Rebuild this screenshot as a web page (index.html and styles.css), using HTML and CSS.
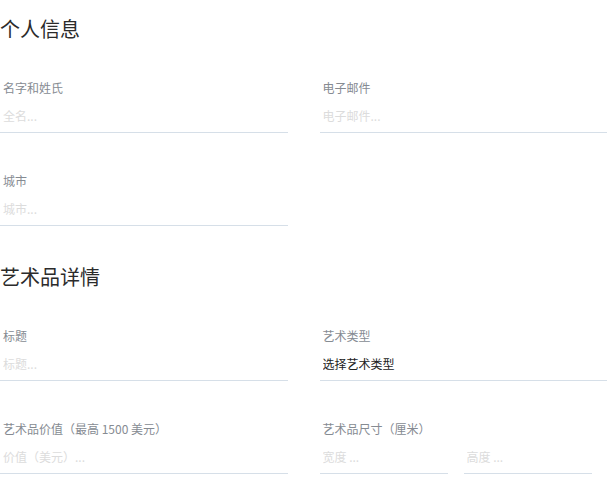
FILE: index.html
```html
<!DOCTYPE html>
<html>
	<head>
		<meta charset="utf-8">
		<title>艺术品提交</title>
		<link rel="stylesheet" href="styles.css">
	</head>
	<body>
		<form class="art-form">
			<section class="form-section">
				<h2>个人信息</h2>
				<div class="form-grid">
					<div class="field">
						<label for="name">名字和姓氏</label>
						<input type="text" id="name" placeholder="全名...">
					</div>
					<div class="field">
						<label for="email">电子邮件</label>
						<input type="text" id="email" placeholder="电子邮件...">
					</div>
					<div class="field">
						<label for="city">城市</label>
						<input type="text" id="city" placeholder="城市...">
					</div>
				</div>
			</section>

			<section class="form-section">
				<h2>艺术品详情</h2>
				<div class="form-grid">
					<div class="field">
						<label for="title">标题</label>
						<input type="text" id="title" placeholder="标题...">
					</div>
					<div class="field">
						<label for="type">艺术类型</label>
						<select id="type">
							<option>选择艺术类型</option>
							<option>绘画</option>
							<option>雕塑</option>
							<option>摄影</option>
						</select>
					</div>
					<div class="field">
						<label for="price">艺术品价值（最高 1500 美元）</label>
						<input type="text" id="price" placeholder="价值（美元）...">
					</div>
					<div class="field">
						<label for="width">艺术品尺寸（厘米）</label>
						<div class="dims">
							<input type="text" id="width" placeholder="宽度 ...">
							<input type="text" id="height" placeholder="高度 ...">
						</div>
					</div>
				</div>
			</section>
		</form>
	</body>
</html>
```

FILE: styles.css
```css
body {
	margin: 0;
	padding-top: 15px;
	background: #ffffff;
	font-family: "Noto Sans CJK SC", "Noto Sans", sans-serif;
	overflow: hidden;
}

.form-section {
	margin-bottom: 37px;
}

.form-section h2 {
	margin: 0 0 37px 0;
	font-size: 20px;
	line-height: 28px;
	font-weight: normal;
	color: #2b2b2b;
}

.form-grid {
	display: grid;
	grid-template-columns: 1fr 1fr;
	column-gap: 32px;
	row-gap: 40px;
}

.field {
	display: flex;
	flex-direction: column;
}

.field label {
	padding-left: 3px;
	margin-bottom: 2px;
	font-size: 12px;
	line-height: 16px;
	color: #868b92;
}

.field input,
.field select {
	box-sizing: border-box;
	height: 35px;
	padding: 0 3px;
	border: none;
	border-bottom: 1px solid #d6dfe8;
	border-radius: 0;
	background: transparent;
	font-family: inherit;
	font-size: 12px;
	color: #222222;
	outline: none;
}

.field select {
	-webkit-appearance: none;
	appearance: none;
}

.field input::placeholder {
	color: #dcdcdc;
}

.dims {
	display: flex;
	gap: 16px;
}

.dims input {
	width: 128px;
}
```
